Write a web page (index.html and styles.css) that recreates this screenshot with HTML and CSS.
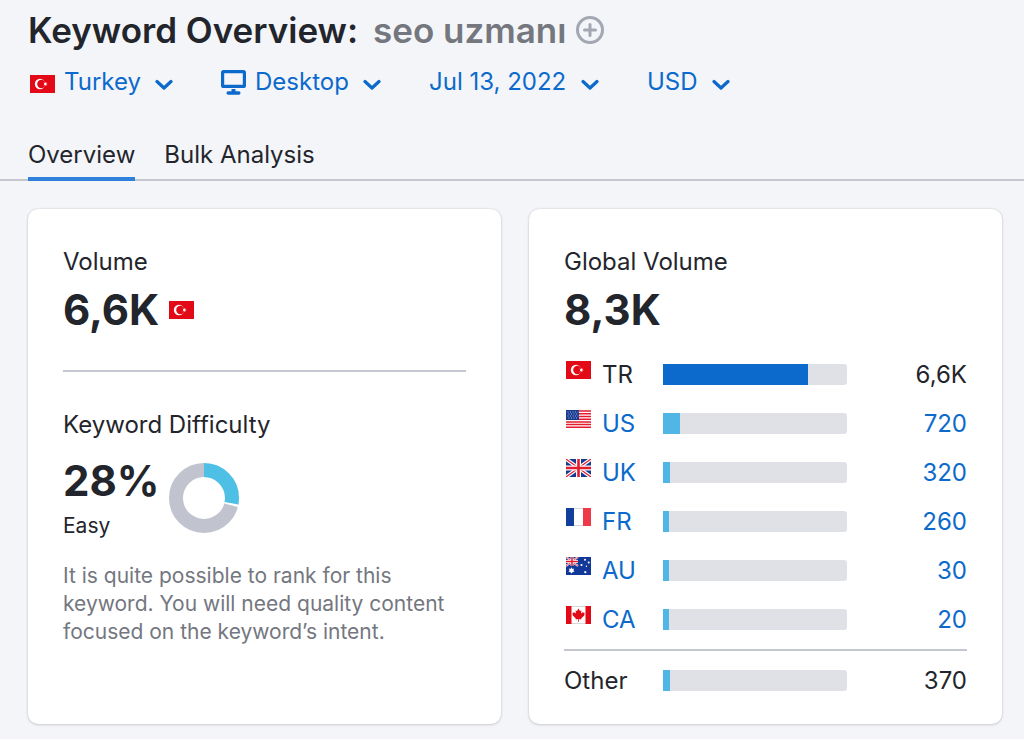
FILE: index.html
```html
<!DOCTYPE html>
<html lang="en">
<head>
    <meta charset="UTF-8">
    <meta name="viewport" content="width=device-width, initial-scale=1.0">
    <title>Keyword Overview</title>
    <link rel="stylesheet" href="styles.css">
</head>
<body>
    <!-- Shared icons -->
    <svg class="sprite" width="0" height="0" aria-hidden="true">
        <symbol id="chevron" viewBox="0 0 18 12">
            <path d="M2 2.5 L9 9 L16 2.5" fill="none" stroke="currentColor" stroke-width="3.2" stroke-linecap="round" stroke-linejoin="round"/>
        </symbol>
        <symbol id="flag-tr" viewBox="0 0 25 18">
            <rect width="25" height="18" fill="#e30a17"/>
            <circle cx="10" cy="9" r="5.2" fill="#fff"/>
            <circle cx="11.4" cy="9" r="4.2" fill="#e30a17"/>
            <path d="M17.8 9 L16.2 9.6 L16.2 11.3 L15.1 10 L13.5 10.5 L14.5 9 L13.5 7.5 L15.1 8 L16.2 6.7 L16.2 8.4 Z" fill="#fff"/>
        </symbol>
        <symbol id="flag-us" viewBox="0 0 25 18">
            <rect width="25" height="18" fill="#fff"/>
            <path d="M0 1h25M0 3.8h25M0 6.6h25M0 9.3h25M0 12h25M0 14.6h25M0 17.2h25" stroke="#e31d2e" stroke-width="1.5"/>
            <rect width="13" height="10" fill="#173a8f"/>
            <path d="M1.5 2h11M1.5 6h11" stroke="#a9b8dc" stroke-width="1" stroke-dasharray="1 1.5"/>
            <path d="M2.5 4h9M2.5 8h9" stroke="#a9b8dc" stroke-width="1" stroke-dasharray="1 1.5"/>
        </symbol>
        <symbol id="flag-uk" viewBox="0 0 25 18">
            <rect width="25" height="18" fill="#173a8f"/>
            <path d="M0 0 L25 18 M25 0 L0 18" stroke="#fff" stroke-width="3.6"/>
            <path d="M0 0 L25 18 M25 0 L0 18" stroke="#e31d2e" stroke-width="1.2"/>
            <path d="M12.5 0v18M0 9h25" stroke="#fff" stroke-width="5"/>
            <path d="M12.5 0v18M0 9h25" stroke="#e31d2e" stroke-width="2.6"/>
        </symbol>
        <symbol id="flag-fr" viewBox="0 0 25 18">
            <rect width="25" height="18" fill="#fff"/>
            <path d="M8 .5h9M8 17.5h9" stroke="#d5d7dd"/>
            <rect width="8" height="18" fill="#123f9c"/>
            <rect x="17" width="8" height="18" fill="#ee3a48"/>
        </symbol>
        <symbol id="flag-au" viewBox="0 0 25 18">
            <rect width="25" height="18" fill="#12389a"/>
            <path d="M0 0 L12 9 M12 0 L0 9" stroke="#fff" stroke-width="2"/>
            <path d="M0 0 L12 9 M12 0 L0 9" stroke="#e31d2e" stroke-width=".8"/>
            <path d="M6 0v9M0 4.5h12" stroke="#fff" stroke-width="2.8"/>
            <path d="M6 0v9M0 4.5h12" stroke="#e31d2e" stroke-width="1.5"/>
            <path d="M5.5 10.3 L6.4 12 L8.2 11.6 L7.4 13.3 L8.6 14.6 L6.8 14.9 L5.5 16.4 L4.2 14.9 L2.4 14.6 L3.6 13.3 L2.8 11.6 L4.6 12 Z" fill="#fff"/>
            <g fill="#fff">
                <circle cx="19" cy="2.8" r="1"/>
                <circle cx="15.5" cy="8" r="1.1"/>
                <circle cx="22.7" cy="5.5" r="1"/>
                <circle cx="20.4" cy="9.2" r=".7"/>
                <circle cx="19.3" cy="15.2" r="1.1"/>
            </g>
        </symbol>
        <symbol id="flag-ca" viewBox="0 0 25 18">
            <rect width="25" height="18" fill="#fff"/>
            <path d="M5 .5h15M5 17.5h15" stroke="#d5d7dd"/>
            <rect width="5.5" height="18" fill="#e30a17"/>
            <rect x="19.5" width="5.5" height="18" fill="#e30a17"/>
            <path d="M12.5 2.5 L14 5 L15.4 4.4 L15 7.6 L16.8 6.2 L18.6 7 L18.2 9.4 L15.2 12.4 L15.3 13.4 L12.9 13 V15.8 H12.1 V13 L9.7 13.4 L9.8 12.4 L6.8 9.4 L6.4 7 L8.2 6.2 L10 7.6 L9.6 4.4 L11 5 Z" fill="#e30a17"/>
        </symbol>
    </svg>

    <header>
        <div class="title-row">
            <h1>Keyword Overview: <span class="keyword">seo uzmanı</span></h1>
            <button class="add-button" aria-label="Add keyword">
                <svg width="30" height="30" viewBox="0 0 30 30" fill="none" stroke="currentColor">
                    <circle cx="15" cy="15" r="12.5" stroke-width="3"/>
                    <path d="M15 9.5v11M9.5 15h11" stroke-width="3" stroke-linecap="round"/>
                </svg>
            </button>
        </div>

        <!-- Filters -->
        <div class="filters">
            <label class="filter">
                <svg class="flag"><use href="#flag-tr"/></svg>
                <select aria-label="Country"><option>Turkey</option></select>
                <svg class="chevron"><use href="#chevron"/></svg>
            </label>
            <label class="filter">
                <svg class="monitor" viewBox="0 0 25 25" fill="none" stroke="currentColor">
                    <rect x="1.6" y="1.6" width="21.8" height="14.8" rx="1" stroke-width="3.2"/>
                    <path d="M12.5 19v4" stroke-width="4"/>
                    <path d="M7.2 23h10.6" stroke-width="3.4" stroke-linecap="round"/>
                </svg>
                <select aria-label="Device"><option>Desktop</option></select>
                <svg class="chevron"><use href="#chevron"/></svg>
            </label>
            <label class="filter">
                <select aria-label="Date"><option>Jul 13, 2022</option></select>
                <svg class="chevron"><use href="#chevron"/></svg>
            </label>
            <label class="filter">
                <select aria-label="Currency"><option>USD</option></select>
                <svg class="chevron"><use href="#chevron"/></svg>
            </label>
        </div>

        <nav class="tabs">
            <a href="#" class="active">Overview</a>
            <a href="#">Bulk Analysis</a>
        </nav>
    </header>

    <main class="cards">
        <section class="card">
            <h2>Volume</h2>
            <div class="metric-row">
                <span class="metric">6,6K</span>
                <svg class="flag"><use href="#flag-tr"/></svg>
            </div>
            <hr>
            <h2>Keyword Difficulty</h2>
            <div class="difficulty">
                <div>
                    <div class="metric">28%</div>
                    <div class="level">Easy</div>
                </div>
                <svg class="donut" viewBox="0 0 70 70" fill="none" stroke-width="14">
                    <circle cx="35" cy="35" r="28" stroke="#c1c4ce"/>
                    <!-- white part is the gap after the 28% arc -->
                    <circle cx="35" cy="35" r="28" stroke="#fff" pathLength="100" stroke-dasharray="29.2 70.8" transform="rotate(-90 35 35)"/>
                    <circle cx="35" cy="35" r="28" stroke="#4fc0e5" pathLength="100" stroke-dasharray="28 72" transform="rotate(-90 35 35)"/>
                </svg>
            </div>
            <p class="hint">It is quite possible to rank for this keyword. You will need quality content focused on the keyword’s intent.</p>
        </section>

        <section class="card">
            <h2>Global Volume</h2>
            <div class="metric-row">
                <span class="metric">8,3K</span>
            </div>
            <table class="countries">
                <tbody>
                    <tr>
                        <th><svg class="flag"><use href="#flag-tr"/></svg>TR</th>
                        <td class="bar-cell"><div class="bar"><div class="fill main" style="width: 79%"></div></div></td>
                        <td class="value">6,6K</td>
                    </tr>
                    <tr>
                        <th><svg class="flag"><use href="#flag-us"/></svg><a href="#">US</a></th>
                        <td class="bar-cell"><div class="bar"><div class="fill" style="width: 9%"></div></div></td>
                        <td class="value"><a href="#">720</a></td>
                    </tr>
                    <tr>
                        <th><svg class="flag"><use href="#flag-uk"/></svg><a href="#">UK</a></th>
                        <td class="bar-cell"><div class="bar"><div class="fill" style="width: 4%"></div></div></td>
                        <td class="value"><a href="#">320</a></td>
                    </tr>
                    <tr>
                        <th><svg class="flag"><use href="#flag-fr"/></svg><a href="#">FR</a></th>
                        <td class="bar-cell"><div class="bar"><div class="fill" style="width: 3%"></div></div></td>
                        <td class="value"><a href="#">260</a></td>
                    </tr>
                    <tr>
                        <th><svg class="flag"><use href="#flag-au"/></svg><a href="#">AU</a></th>
                        <td class="bar-cell"><div class="bar"><div class="fill" style="width: 3%"></div></div></td>
                        <td class="value"><a href="#">30</a></td>
                    </tr>
                    <tr>
                        <th><svg class="flag"><use href="#flag-ca"/></svg><a href="#">CA</a></th>
                        <td class="bar-cell"><div class="bar"><div class="fill" style="width: 3%"></div></div></td>
                        <td class="value"><a href="#">20</a></td>
                    </tr>
                </tbody>
            </table>
            <table class="countries other">
                <tbody>
                    <tr>
                        <th>Other</th>
                        <td class="bar-cell"><div class="bar"><div class="fill" style="width: 4%"></div></div></td>
                        <td class="value">370</td>
                    </tr>
                </tbody>
            </table>
        </section>
    </main>
</body>
</html>
```
FILE: styles.css
```css
* {
    box-sizing: border-box;
}

body {
    margin: 0;
    background-color: #f4f5f9;
    color: #23252c;
    font-family: Inter, "Liberation Sans", sans-serif;
    font-size: 24px;
    line-height: 32px;
}

a {
    color: #0b6acb;
    text-decoration: none;
}

.sprite {
    position: absolute;
}

.flag {
    width: 25px;
    height: 18px;
    flex: none;
}

/* Header */
.title-row {
    display: flex;
    align-items: center;
    gap: 9px;
    padding: 8px 28px 0;
}

h1 {
    margin: 0;
    font-size: 35px;
    line-height: 44px;
    font-weight: 600;
}

.keyword {
    margin-left: 6px;
    color: #74777e;
}

.add-button {
    display: flex;
    padding: 0;
    border: none;
    background: none;
    color: #a3a7b2;
    cursor: pointer;
}

.filters {
    display: flex;
    flex-wrap: wrap;
    gap: 48px;
    padding: 14px 30px 0;
}

.filter {
    position: relative;
    display: flex;
    align-items: center;
    gap: 9px;
    color: #0b6acb;
}

.filter .flag {
    margin-top: 4px;
}

.filter select {
    appearance: none;
    height: 32px;
    padding: 0 32px 0 0;
    border: none;
    background: none;
    color: inherit;
    font: inherit;
    cursor: pointer;
}

.chevron {
    position: absolute;
    right: 0;
    top: 13px;
    width: 18px;
    height: 12px;
    pointer-events: none;
}

.monitor {
    width: 25px;
    height: 25px;
}

.tabs {
    display: flex;
    gap: 29px;
    margin-top: 37px;
    padding: 0 28px;
    box-shadow: inset 0 -2px #c4c7cf;
}

.tabs a {
    padding: 4px 0 6px;
    border-bottom: 4px solid transparent;
    color: inherit;
}

.tabs .active {
    border-bottom-color: #2f80dc;
}

/* Cards */
.cards {
    display: grid;
    grid-template-columns: 1fr 1fr;
    gap: 28px;
    padding: 28px 22px 14px 28px;
}

.card {
    padding: 37px 35px 14px;
    border-radius: 10px;
    background-color: #fff;
    box-shadow: 0 0 2px rgba(25, 27, 35, 0.18), 0 1px 3px rgba(25, 27, 35, 0.14);
}

h2 {
    margin: 0;
    font-size: 24px;
    font-weight: 400;
}

.metric-row {
    display: flex;
    align-items: center;
    gap: 10px;
    margin-top: 4px;
}

.metric {
    font-size: 42px;
    line-height: 56px;
    font-weight: 700;
}

hr {
    margin: 32px 0 37px;
    border: none;
    border-top: 2px solid #c4c7cf;
}

.difficulty {
    display: flex;
    align-items: center;
    gap: 10px;
    margin-top: 12px;
}

.level {
    margin-top: 1px;
    font-size: 21px;
}

.donut {
    width: 70px;
    height: 70px;
}

.hint {
    margin: 20px 0 0;
    color: #74777f;
    font-size: 21px;
    line-height: 28px;
}

/* Volume by country */
.countries {
    width: 100%;
    margin-top: 12px;
    border-collapse: collapse;
    table-layout: fixed;
}

.countries tr {
    height: 49px;
}

.countries th,
.countries td {
    padding: 0;
    font-weight: 400;
    text-align: left;
}

.countries th {
    width: 99px;
}

.countries .flag {
    margin: 0 11px 0 2px;
    vertical-align: 4px;
}

.countries .bar-cell {
    width: 184px;
}

.countries .value {
    text-align: right;
}

.bar {
    height: 21px;
    border-radius: 0 3px 3px 0;
    background-color: #e0e1e6;
    overflow: hidden;
}

.fill {
    height: 100%;
    background-color: #50b6e6;
}

.fill.main {
    background-color: #0b6acb;
}

.other {
    margin-top: 5px;
    border-top: 2px solid #c4c7cf;
}

.other tr {
    height: 60px;
}
```
